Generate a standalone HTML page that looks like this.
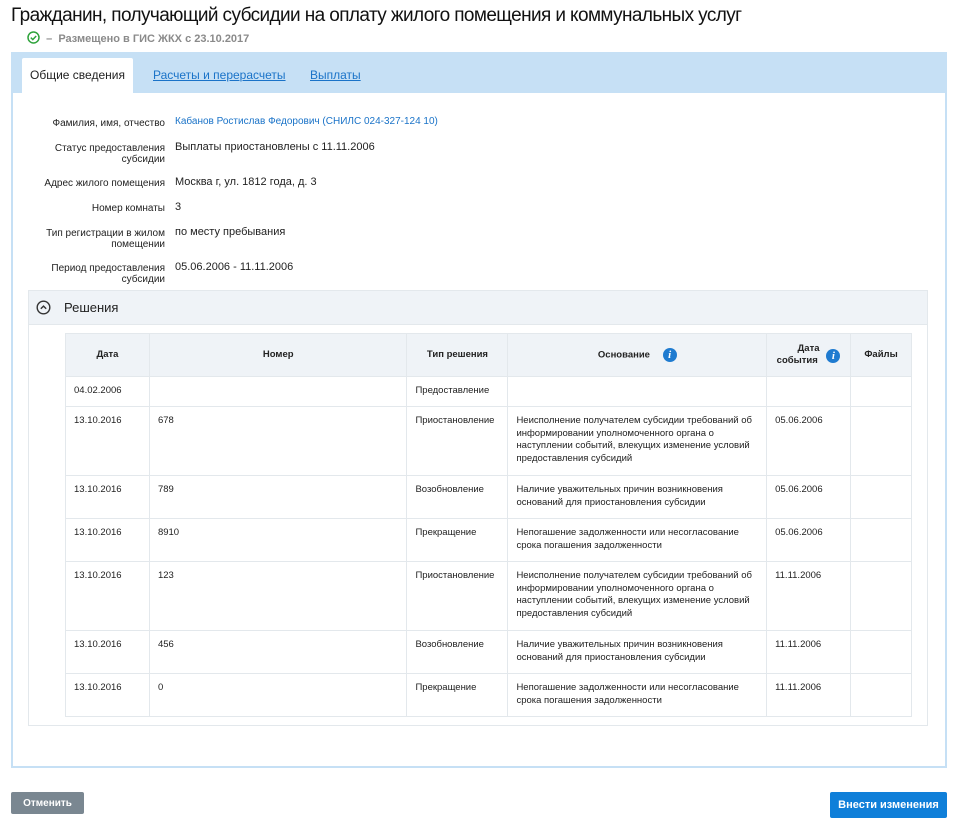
<!DOCTYPE html>
<html><head><meta charset="utf-8"><style>
*{box-sizing:border-box;margin:0;padding:0}
body{width:956px;height:823px;background:#fff;font-family:"Liberation Sans",sans-serif;color:#222;position:relative;overflow:hidden}
.abs{position:absolute}
h1{position:absolute;left:11px;top:5px;font-size:19px;font-weight:normal;letter-spacing:-0.6px;color:#111;white-space:nowrap}
.sub{left:27px;top:31px;font-size:11px;color:#8a8a8a;font-weight:bold}
.panel{left:11px;top:52px;width:936px;height:716px;border:2px solid #c6e0f5;border-top:none}
.tabbar{left:11px;top:52px;width:936px;height:41px;background:#c6e0f5}
.tab{top:58px;height:35px;font-size:12px;line-height:35px}
.tab a{color:#1a73c8;text-decoration:underline}
.lbl{position:absolute;right:791px;font-size:10px;text-align:right;line-height:11px;color:#222}
.val{position:absolute;left:175px;font-size:11px;color:#222}
.sec{left:28px;top:290px;width:900px;height:436px;border:1px solid #e3e8ec}
.sech{left:28px;top:290px;width:900px;height:35px;background:#eff3f7;border:1px solid #e3e8ec}
table{position:absolute;left:65px;top:333px;width:847px;border-collapse:collapse;font-size:9.5px}
td,th{border:1px solid #e3e8ec;vertical-align:top;padding:8px 8px 4px;line-height:12.5px}
th{background:#eff3f7;font-weight:bold;vertical-align:middle;text-align:center;height:43px;padding:4px}
.i{display:inline-block;width:14px;height:14px;border-radius:50%;background:#1f7bd0;color:#fff;font:italic bold 11px/14px "Liberation Serif",serif;text-align:center;vertical-align:middle;margin-left:10px}
.btn{font-size:11px;font-weight:bold;color:#fff;text-align:center;border-radius:2px}
</style></head><body>
<h1>Гражданин, получающий субсидии на оплату жилого помещения и коммунальных услуг</h1>
<div class="abs sub"><svg width="13" height="13" viewBox="0 0 13 13" style="vertical-align:-2px"><circle cx="6.5" cy="6.5" r="5.5" fill="none" stroke="#2fa33c" stroke-width="1.5"/><path d="M3.8 6.6l2 2 3.4-3.6" fill="none" stroke="#2fa33c" stroke-width="1.5"/></svg>&nbsp; –&nbsp; Размещено в ГИС ЖКХ с 23.10.2017</div>
<div class="abs tabbar"></div>
<div class="abs panel"></div>
<div class="abs tab" style="left:22px;width:111px;background:#fff;text-align:center;border-radius:2px 2px 0 0">Общие сведения</div>
<div class="abs tab" style="left:153px"><a>Расчеты и перерасчеты</a></div>
<div class="abs tab" style="left:310px"><a>Выплаты</a></div>

<div class="lbl" style="top:118px">Фамилия, имя, отчество</div>
<div class="val" style="top:116px;font-size:10px;color:#1a73c8">Кабанов Ростислав Федорович (СНИЛС 024-327-124 10)</div>
<div class="lbl" style="top:143px">Статус предоставления<br>субсидии</div>
<div class="val" style="top:141px">Выплаты приостановлены с 11.11.2006</div>
<div class="lbl" style="top:178px">Адрес жилого помещения</div>
<div class="val" style="top:176px">Москва г, ул. 1812 года, д. 3</div>
<div class="lbl" style="top:203px">Номер комнаты</div>
<div class="val" style="top:201px">3</div>
<div class="lbl" style="top:228px">Тип регистрации в жилом<br>помещении</div>
<div class="val" style="top:226px">по месту пребывания</div>
<div class="lbl" style="top:263px">Период предоставления<br>субсидии</div>
<div class="val" style="top:261px">05.06.2006 - 11.11.2006</div>

<div class="abs sec"></div>
<div class="abs sech"></div>
<svg class="abs" style="left:36px;top:300px" width="15" height="15" viewBox="0 0 15 15"><circle cx="7.5" cy="7.5" r="6.3" fill="none" stroke="#333" stroke-width="1.4"/><path d="M4.8 8.8l2.7-2.7 2.7 2.7" fill="none" stroke="#333" stroke-width="1.4"/></svg>
<div class="abs" style="left:64px;top:300px;font-size:13px">Решения</div>

<table>
<colgroup><col style="width:84px"><col style="width:258px"><col style="width:101px"><col style="width:259px"><col style="width:84px"><col style="width:61px"></colgroup>
<tr><th>Дата</th><th>Номер</th><th>Тип решения</th><th>Основание <span class="i">i</span></th><th>Дата<br>события <span class="i" style="vertical-align:top;margin-top:-6px;margin-left:6px">i</span></th><th>Файлы</th></tr>
<tr style="height:30px"><td>04.02.2006</td><td></td><td>Предоставление</td><td></td><td></td><td></td></tr>
<tr style="height:69px"><td>13.10.2016</td><td>678</td><td>Приостановление</td><td>Неисполнение получателем субсидии требований об информировании уполномоченного органа о наступлении событий, влекущих изменение условий предоставления субсидий</td><td>05.06.2006</td><td></td></tr>
<tr style="height:43px"><td>13.10.2016</td><td>789</td><td>Возобновление</td><td>Наличие уважительных причин возникновения оснований для приостановления субсидии</td><td>05.06.2006</td><td></td></tr>
<tr style="height:43px"><td>13.10.2016</td><td>8910</td><td>Прекращение</td><td>Непогашение задолженности или несогласование срока погашения задолженности</td><td>05.06.2006</td><td></td></tr>
<tr style="height:69px"><td>13.10.2016</td><td>123</td><td>Приостановление</td><td>Неисполнение получателем субсидии требований об информировании уполномоченного органа о наступлении событий, влекущих изменение условий предоставления субсидий</td><td>11.11.2006</td><td></td></tr>
<tr style="height:43px"><td>13.10.2016</td><td>456</td><td>Возобновление</td><td>Наличие уважительных причин возникновения оснований для приостановления субсидии</td><td>11.11.2006</td><td></td></tr>
<tr style="height:43px"><td>13.10.2016</td><td>0</td><td>Прекращение</td><td>Непогашение задолженности или несогласование срока погашения задолженности</td><td>11.11.2006</td><td></td></tr>
</table>

<div class="abs btn" style="left:11px;top:792px;width:73px;height:22px;line-height:23px;background:#7a8791;font-size:10px">Отменить</div>
<div class="abs btn" style="left:830px;top:792px;width:117px;height:26px;line-height:26px;background:#0f7fd9">Внести изменения</div>
</body></html>
